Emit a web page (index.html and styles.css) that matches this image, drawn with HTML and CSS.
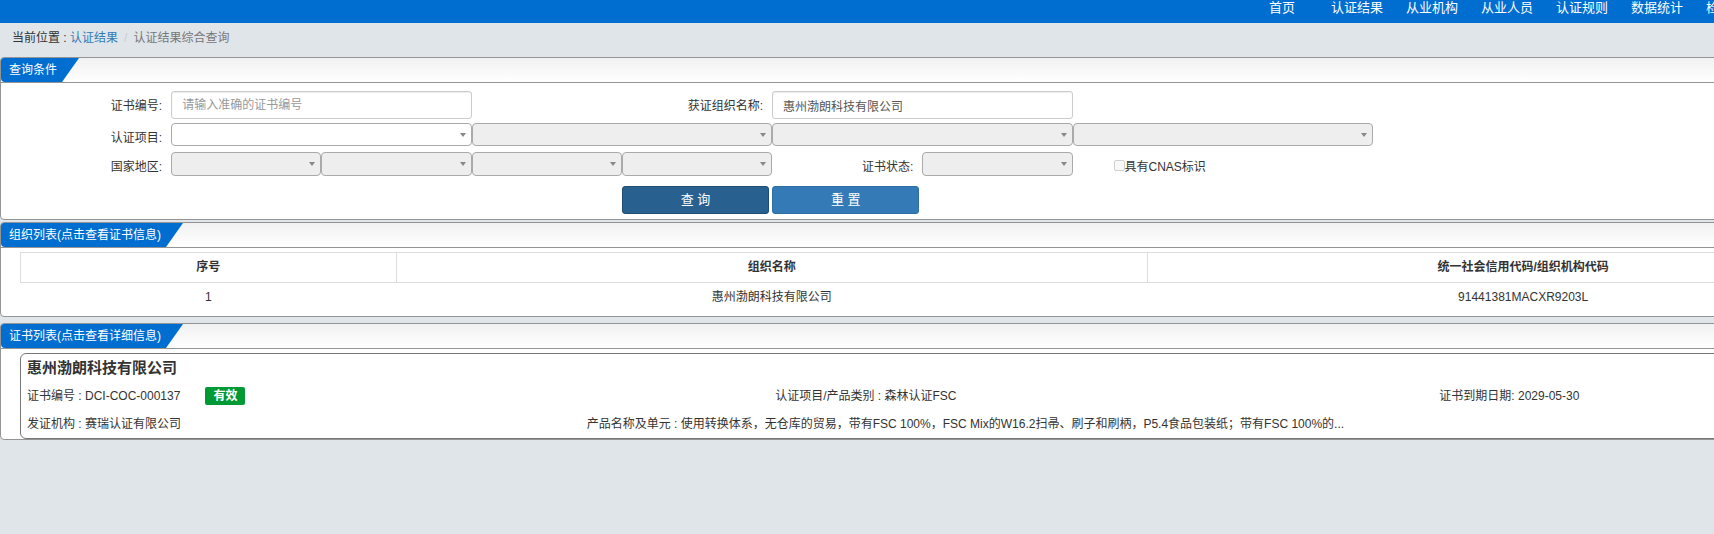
FILE: index.html
```html
<!DOCTYPE html>
<html lang="zh-CN">
<head>
  <meta charset="UTF-8">
  <title>认证结果综合查询</title>
  <meta name="viewport" content="width=device-width, initial-scale=1.0">
  <link rel="stylesheet" href="styles.css">
</head>
<body>
<div class="page">

  <nav class="topbar">
    <a class="home" href="#">首页</a>
    <a href="#">认证结果</a>
    <a href="#">从业机构</a>
    <a href="#">从业人员</a>
    <a href="#">认证规则</a>
    <a href="#">数据统计</a>
    <a href="#">检</a>
  </nav>

  <div class="breadcrumb">
    <span>当前位置 :&nbsp;</span>
    <a href="#">认证结果</a>
    <span class="sep">/</span>
    <span class="active">认证结果综合查询</span>
  </div>

  <!-- 查询条件 -->
  <section class="panel">
    <div class="panel-head"><h2 class="tab">查询条件</h2></div>
    <form class="query">
      <div class="row row-input">
        <label for="certNo">证书编号:</label>
        <input class="text w2" type="text" id="certNo" placeholder="请输入准确的证书编号">
        <label class="w2" for="orgName">获证组织名称:</label>
        <input class="text w2" type="text" id="orgName" value="惠州渤朗科技有限公司">
      </div>
      <div class="row row-item">
        <label for="item1">认证项目:</label>
        <select class="w2" id="item1"></select>
        <select class="w2" aria-label="认证项目二级" disabled></select>
        <select class="w2" aria-label="认证项目三级" disabled></select>
        <select class="w2" aria-label="认证项目四级" disabled></select>
      </div>
      <div class="row row-area">
        <label for="country">国家地区:</label>
        <select id="country" disabled></select>
        <select aria-label="省" disabled></select>
        <select aria-label="市" disabled></select>
        <select aria-label="区县" disabled></select>
        <label for="status">证书状态:</label>
        <select id="status" disabled></select>
        <div class="check w2">
          <input type="checkbox" id="cnas" disabled><label for="cnas">具有CNAS标识</label>
        </div>
      </div>
      <div class="row row-btn">
        <button class="btn search" type="button">查 询</button>
        <button class="btn" type="reset">重 置</button>
      </div>
    </form>
  </section>

  <!-- 组织列表 -->
  <section class="panel panel-org">
    <div class="panel-head"><h2 class="tab">组织列表(点击查看证书信息)</h2></div>
    <table class="org">
      <thead>
        <tr>
          <th class="no">序号</th>
          <th>组织名称</th>
          <th>统一社会信用代码/组织机构代码</th>
        </tr>
      </thead>
      <tbody>
        <tr>
          <td>1</td>
          <td>惠州渤朗科技有限公司</td>
          <td>91441381MACXR9203L</td>
        </tr>
      </tbody>
    </table>
  </section>

  <!-- 证书列表 -->
  <section class="panel panel-cert">
    <div class="panel-head"><h2 class="tab">证书列表(点击查看详细信息)</h2></div>
    <div class="cert">
      <h3>惠州渤朗科技有限公司</h3>
      <div class="cert-row">
        <div class="cert-no"><span>证书编号 : DCI-COC-000137</span><span class="badge">有效</span></div>
        <div>认证项目/产品类别 : 森林认证FSC</div>
        <div>证书到期日期: 2029-05-30</div>
      </div>
      <div class="cert-row cert-scope">
        <div>发证机构 : 赛瑞认证有限公司</div>
        <div>产品名称及单元 : 使用转换体系，无仓库的贸易，带有FSC 100%，FSC Mix的W16.2扫帚、刷子和刷柄，P5.4食品包装纸；带有FSC 100%的...</div>
      </div>
    </div>
  </section>

</div>
</body>
</html>
```
FILE: styles.css
```css
* {
  box-sizing: border-box;
}
body {
  margin: 0;
  background-color: #e0e5e9;
  font-family: "Liberation Sans", "Noto Sans CJK SC", sans-serif;
  font-size: 12px;
  line-height: 18px;
  color: #333;
  overflow: hidden;
}
/* the page is wider than the window */
.page {
  width: 112%;
}
a {
  color: #337ab7;
  text-decoration: none;
}
h2, h3 {
  margin: 0;
}

.topbar {
  display: flex;
  gap: 23px;
  height: 23px;
  padding-left: 66.1%;
  background-color: #006dd0;
  font-size: 13px;
  line-height: 16px;
}
.topbar a {
  color: #fff;
  white-space: nowrap;
}
.topbar .home {
  margin-right: 13px;
}

.breadcrumb {
  display: flex;
  padding: 6px 12px 10px;
}
.breadcrumb .sep {
  padding: 0 6px;
  color: #ccc;
}
.breadcrumb .active {
  color: #777;
}

.panel {
  background-color: #fff;
  border: 1px solid #949494;
  border-radius: 4px;
}
.panel-org {
  margin-top: 2px;
  padding-bottom: 7px;
}
.panel-cert {
  margin-top: 6px;
}
.panel-head {
  display: flex;
  height: 25px;
  border-bottom: 1px solid #949494;
  border-radius: 4px 4px 0 0;
  background: linear-gradient(#f1f1f1, #fff);
}
.tab {
  padding: 1px 22px 0 8px;
  background-color: #006dd0;
  border-radius: 3px 0 0 4px;
  clip-path: polygon(0 0, 100% 0, calc(100% - 17px) 100%, 0 100%);
  color: #fff;
  font-size: 12px;
  font-weight: normal;
  line-height: 23px;
}

/* query form, 12 columns */
.query {
  width: 94%;
  margin-left: 20px;
  padding: 8px 0 5px;
}
.row {
  display: grid;
  grid-template-columns: repeat(12, 1fr);
}
.w2 {
  grid-column: span 2;
}
.row > label {
  padding: 6px 9px 0 0;
  text-align: right;
}
.row-input {
  height: 32px;
}
.row-item {
  height: 29px;
}
.row-area {
  height: 34px;
}
.text {
  height: 28px;
  padding: 0 10px;
  border: 1px solid #ccc;
  border-radius: 3px;
  box-shadow: inset 0 1px 1px rgba(0,0,0,0.08);
  font: inherit;
  color: #555;
}
.text::placeholder {
  color: #999;
}
select {
  appearance: none;
  width: 100%;
  height: 23px;
  border: 1px solid #aaa;
  border-radius: 4px;
  background: #fff url("data:image/svg+xml,%3Csvg xmlns='http://www.w3.org/2000/svg' width='6' height='4'%3E%3Cpath d='M0 0h6L3 4z' fill='%23888'/%3E%3C/svg%3E") no-repeat right 5px center;
  font: inherit;
}
select:disabled {
  background-color: #eee;
  opacity: 1;
}
.row-area select {
  height: 24px;
}
.check {
  display: flex;
  align-items: flex-start;
  padding: 6px 0 0 41px;
}
.check input {
  appearance: none;
  width: 11px;
  height: 11px;
  margin: 2px 0 0;
  border: 1px solid #d0d0d0;
  border-radius: 2px;
  background-color: #f8f8f8;
}
.btn {
  height: 28px;
  margin-right: 3px;
  border: 1px solid #2e6da4;
  border-radius: 3px;
  background-color: #337ab7;
  color: #fff;
  font: inherit;
  font-size: 13px;
  cursor: pointer;
}
.search {
  grid-column-start: 5;
  background-color: #286090;
  border-color: #204d74;
}

.org {
  width: 98%;
  margin: 4px 0 0 19px;
  table-layout: fixed;
  border-collapse: collapse;
  text-align: center;
}
.org .no {
  width: 20%;
}
.org th {
  padding: 5px 0 6px;
  border: 1px solid #ddd;
}
.org td {
  padding: 5px 0 3px;
}

.cert {
  margin: 4px 19px 0;
  padding: 4px 6px 5px;
  border: 1px solid #777;
  border-radius: 6px;
}
.cert h3 {
  font-size: 15px;
  line-height: 20px;
}
.cert-row {
  display: grid;
  grid-template-columns: 40.1% 35.6% 1fr;
  margin-top: 9px;
  white-space: nowrap;
}
.cert-scope {
  grid-template-columns: 30% 1fr;
  margin-top: 10px;
}
.cert-no {
  display: flex;
  gap: 25px;
}
.badge {
  padding: 0 8px;
  border-radius: 2px;
  background-color: #093;
  color: #fff;
  font-weight: bold;
}
```
